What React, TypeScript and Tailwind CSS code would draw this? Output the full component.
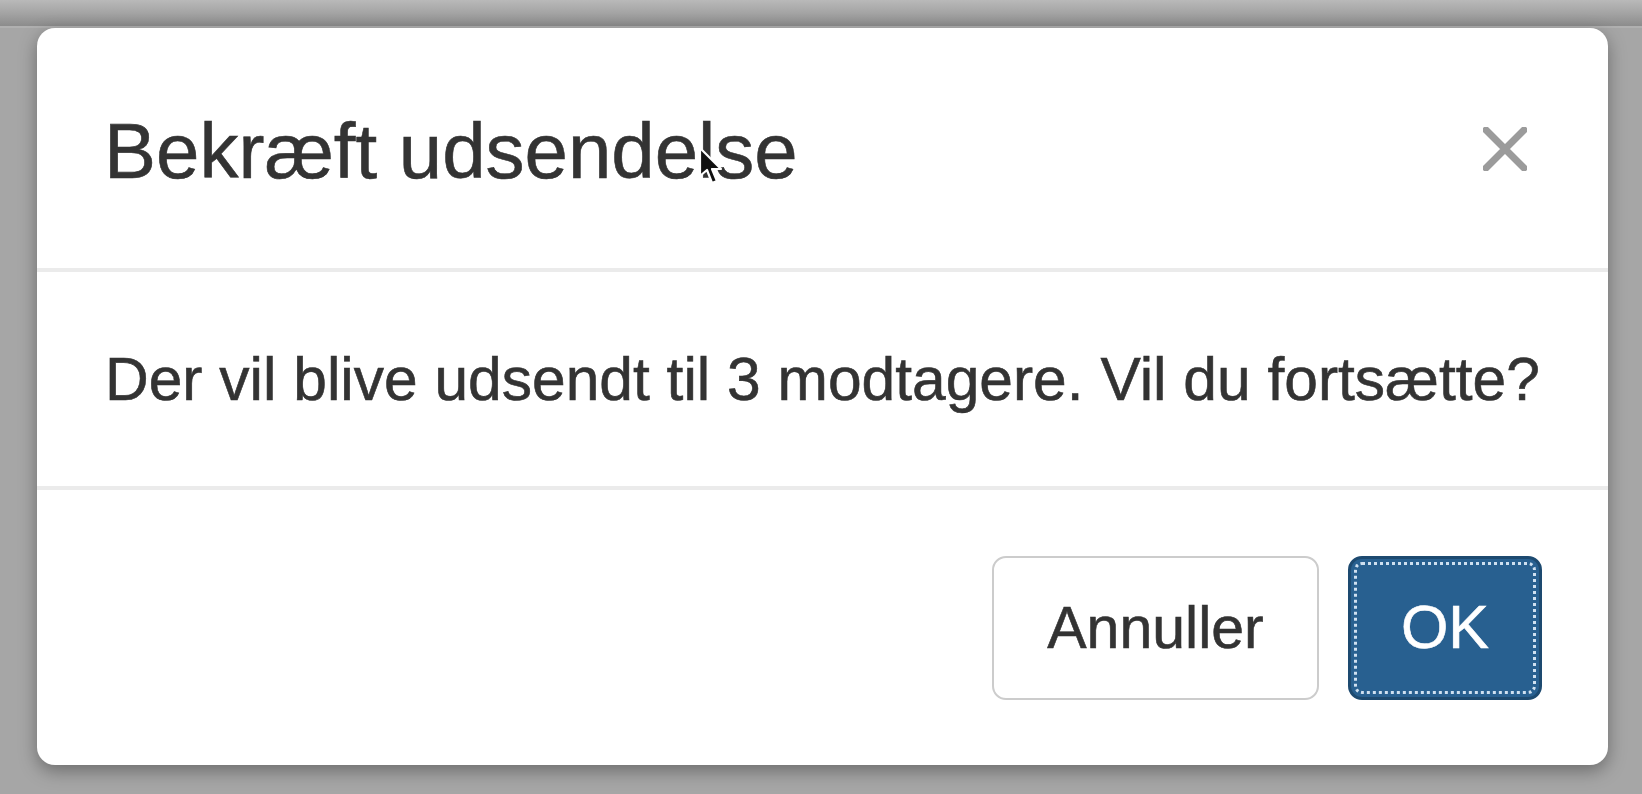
import React from 'react';

const CloseIcon = () => (
  <svg width="44" height="44" viewBox="0 0 44 44" aria-hidden="true">
    <path d="M3 3 L41 41 M41 3 L3 41" stroke="#9b9b9b" strokeWidth="7" strokeLinecap="round" />
  </svg>
);

const Cursor = () => (
  <svg
    className="absolute left-[698px] top-[146px]"
    width="28"
    height="42"
    viewBox="0 0 28 42"
    aria-hidden="true"
  >
    <path
      d="M2 2 L2 30 L9 24 L14 37 L19 35 L14 23 L23 23 Z"
      fill="#111"
      stroke="#fff"
      strokeWidth="2.2"
      strokeLinejoin="round"
    />
  </svg>
);

const App = () => {
  return (
    <div
      className="relative w-full h-[794px] overflow-hidden bg-[#a6a6a6] text-[#333]"
      style={{ fontFamily: '"Liberation Sans", Arial, sans-serif' }}
    >
      {/* top bar of the window behind */}
      <div className="h-[28px] bg-gradient-to-b from-[#b9b9b9] via-[#a4a4a4] to-[#8c8c8c] border-b-2 border-[#b0b0b0]" />

      <div className="pl-[37px]">
        <div className="w-[1571px] h-[737px] bg-white rounded-[18px] shadow-[0_6px_18px_rgba(0,0,0,0.35)] flex flex-col">
          {/* header */}
          <div className="flex items-center justify-between pl-[67px] pr-[81px] pt-[81px] pb-[74px] border-b-4 border-[#ebebeb]">
            <h4 className="text-[78px] leading-[85px] font-normal [-webkit-text-stroke:0.6px_#333]">
              Bekræft udsendelse
            </h4>
            <button className="-mt-[6px]" type="button" aria-label="Luk">
              <CloseIcon />
            </button>
          </div>

          {/* body */}
          <div className="pl-[68px] pr-[40px] pt-[64px] pb-[63px] border-b-4 border-[#ebebeb]">
            <p className="text-[60.5px] leading-[87px] whitespace-nowrap [-webkit-text-stroke:0.6px_#333]">
              Der vil blive udsendt til 3 modtagere. Vil du fortsætte?
            </p>
          </div>

          {/* footer */}
          <div className="flex justify-end gap-[29px] pr-[66px] pt-[66px]">
            <button
              type="button"
              className="h-[144px] w-[327px] flex items-center justify-center bg-white border-2 border-[#cccccc] rounded-[14px] text-[59px] text-[#333] [-webkit-text-stroke:0.6px_#333]"
            >
              Annuller
            </button>
            <button
              type="button"
              className="h-[144px] w-[194px] flex items-center justify-center bg-[#286090] border-[3px] border-[#1d4a70] rounded-[14px] text-[61px] text-white [-webkit-text-stroke:0.6px_#fff] outline-[3px] outline-dotted outline-[#cfe0f0] outline-offset-[-9px]"
            >
              OK
            </button>
          </div>
        </div>
      </div>

      <Cursor />
    </div>
  );
};

export default App;
